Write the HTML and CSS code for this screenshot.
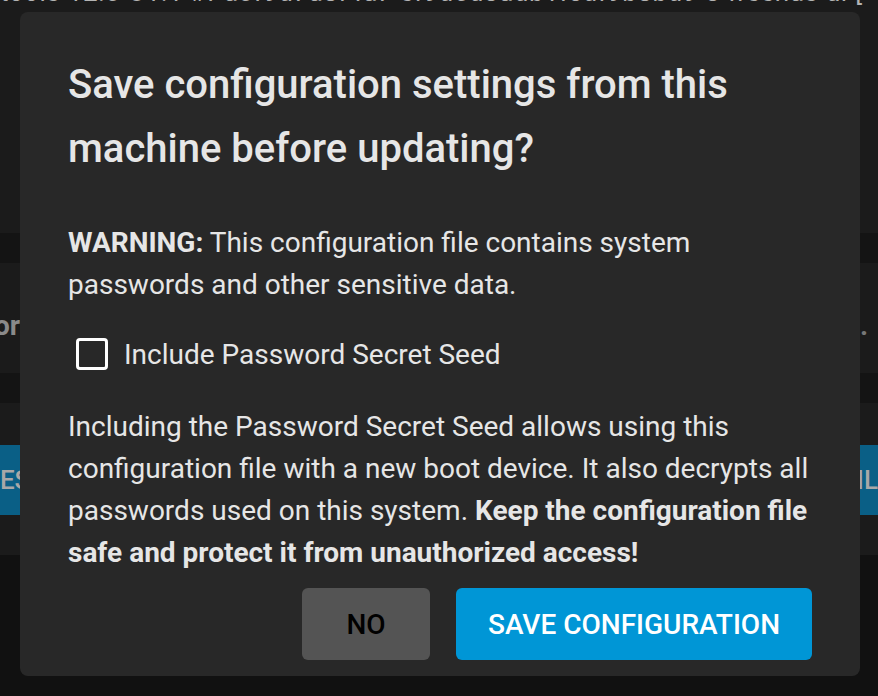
FILE: index.html
```html
<!DOCTYPE html>
<html lang="en">
<head>
<meta charset="utf-8">
<title>Save configuration</title>
<link rel="stylesheet" href="styles.css">
</head>
<body>
<div class="page">
  <div class="header"><div class="path">tools-12.0-U1.1 #f-a0f9d7a8f4a7 ef9d5d3adb1fcdf9b8bd9-3 freenas-ui-[</div></div>
  <div class="band"></div>
  <div class="row tall"><span class="ghost">or</span><span class="ghost dot">.</span></div>
  <div class="band"></div>
  <div class="row short"></div>
  <div class="row actions"><span class="bgbtn left">YES</span><span class="bgbtn right">EMAIL</span></div>
  <div class="row low"></div>
  <div class="foot"></div>
</div>

<div class="dialog">
  <h1 class="title">Save configuration settings from this machine before updating?</h1>
  <p class="warn"><b>WARNING:</b> This configuration file contains system passwords and other sensitive data.</p>
  <label class="check"><span class="box"></span><span>Include Password Secret Seed</span></label>
  <p class="info">Including the Password Secret Seed allows using this configuration file with a new boot device. It also decrypts all passwords used on this system. <b>Keep the configuration file safe and protect it from unauthorized access!</b></p>
  <div class="buttons">
    <button class="btn no">NO</button>
    <button class="btn save">SAVE CONFIGURATION</button>
  </div>
</div>
</body>
</html>
```
FILE: styles.css
```css
* { box-sizing: border-box; }
html, body { margin: 0; padding: 0; }
body {
  width: 878px;
  height: 696px;
  overflow: hidden;
  background: #111;
  font-family: Roboto, "Noto Sans", sans-serif;
  position: relative;
}
.page { display: flex; flex-direction: column; height: 696px; overflow: hidden; }
.header { height: 233px; background: #1b1b1b; overflow: hidden; }
.path {
  margin-top: -23px;
  font-size: 26px;
  line-height: 30px;
  color: #b4b4b4;
  white-space: nowrap;
  letter-spacing: 0.5px;
}
.band { height: 30px; background: #141414; }
.row { background: #1b1b1b; display: flex; align-items: center; justify-content: space-between; overflow: hidden; }
.tall { height: 110px; }
.short { height: 42px; }
.low { height: 40px; }
.ghost { color: #8a8a8a; font-size: 28px; font-weight: 700; margin-left: -6px; margin-top: 14px; }
.ghost.dot { margin-left: 0; margin-right: 10px; color: #777; }
.actions { height: 70px; }
.bgbtn {
  background: #0a5f86;
  color: #a8a8a8;
  font-size: 26px;
  font-weight: 500;
  height: 70px;
  display: flex;
  align-items: center;
  padding: 0 18px;
}
.bgbtn.left { margin-left: -34px; }
.bgbtn.right { padding: 0 0 0 18px; }
.foot { flex: 1; background: #111; }

.dialog {
  position: absolute;
  left: 20px;
  top: 12px;
  width: 840px;
  height: 664px;
  background: #282828;
  border-radius: 8px;
  padding: 41px 48px 16px 48px;
  color: #e6e6e6;
  display: flex;
  flex-direction: column;
}
.title {
  margin: 0;
  font-size: 40px;
  font-weight: 500;
  line-height: 64px;
  width: 700px;
}
.warn, .info {
  margin: 0;
  font-size: 28px;
  line-height: 41.7px;
}
.warn { margin-top: 41px; }
.check {
  display: flex;
  align-items: center;
  gap: 16px;
  margin-top: 33px;
  margin-left: 8px;
  font-size: 28px;
  height: 32px;
}
.box {
  width: 32px;
  height: 32px;
  border: 3px solid #fff;
  border-radius: 4px;
}
.info { margin-top: 36px; }
.buttons {
  display: flex;
  justify-content: flex-end;
  gap: 26px;
  margin-top: auto;
}
.btn {
  height: 72px;
  border: none;
  border-radius: 6px;
  font-family: Roboto, sans-serif;
  font-size: 28px;
  font-weight: 500;
  padding: 0;
}
.no { background: #545454; color: #000; width: 128px; }
.save { background: #0096d6; color: #fff; width: 356px; }
```
